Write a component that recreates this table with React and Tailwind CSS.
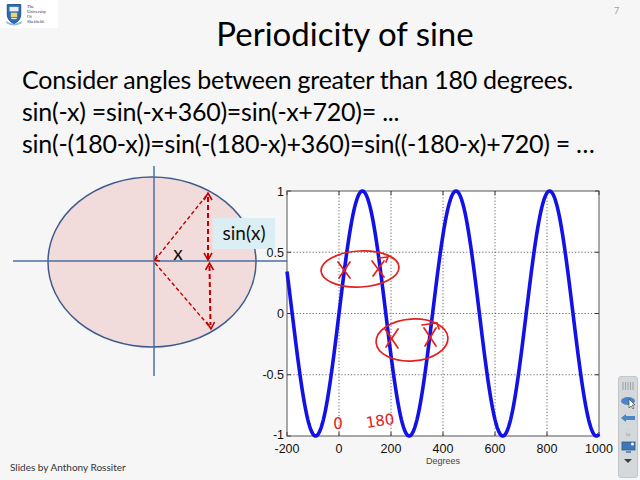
import React from 'react';

// sine curve in page coordinates of the chart svg
const X = (d) => 339 + d * 0.26;
const Y = (v) => 313.5 - v * 122.5;

const sinePath = () => {
  const pts = [];
  for (let d = -200; d <= 1000; d += 4) {
    pts.push(`${X(d).toFixed(2)},${Y(Math.sin((d * Math.PI) / 180)).toFixed(2)}`);
  }
  return 'M' + pts.join(' L');
};

function Logo() {
  return (
    <div className="w-[58px] h-[28px] shrink-0 bg-white flex items-center gap-[4px] pl-[5px]">
      <svg width="18" height="23" viewBox="0 0 20 25">
        <path d="M0.5 19.5 Q10 26 19.5 19.5 L18 22.5 Q10 27 2 22.5 Z" fill="#8fb7dc" />
        <path d="M2.5 1.5 H17.5 V12 Q17.5 19.5 10 22.5 Q2.5 19.5 2.5 12 Z" fill="#2d6db5" stroke="#1b4683" strokeWidth="1" />
        <rect x="5" y="4" width="10" height="5" fill="#e9eef6" />
        <rect x="6.5" y="10.5" width="7" height="5" fill="#f4d36a" />
        <path d="M7 17 H13" stroke="#e9eef6" strokeWidth="1.2" />
      </svg>
      <div className="flex flex-col font-['Liberation_Serif',serif] text-[4.5px] leading-[5px] text-[#1d2a5a]">
        <span>The</span>
        <span>University</span>
        <span>Of</span>
        <span>Sheffield.</span>
      </div>
    </div>
  );
}

function UnitCircle() {
  const red = '#c00000';
  return (
    <svg width="290" height="220" viewBox="0 162 290 220">
      <ellipse cx="152" cy="262" rx="104" ry="85" fill="#f2dcdb" stroke="#3d5b8c" strokeWidth="1.5" />
      <line x1="13" y1="261" x2="288" y2="261" stroke="#4a6fa5" strokeWidth="1.5" />
      <line x1="154" y1="166" x2="154" y2="376" stroke="#4a6fa5" strokeWidth="1.5" />

      <g stroke={red} fill="none" strokeWidth="1.4" strokeDasharray="4 2.5">
        <line x1="155" y1="260" x2="206" y2="196" />
        <line x1="155" y1="263" x2="209" y2="326" />
      </g>
      <g stroke={red} fill="none" strokeWidth="2" strokeDasharray="5 3">
        <line x1="208" y1="197" x2="208" y2="258" />
        <line x1="209.5" y1="266" x2="210.5" y2="325" />
      </g>
      <g stroke={red} fill="none" strokeWidth="1.6">
        <polyline points="204,200 208,193 212,200" />
        <polyline points="204,253 208,260 212,253" />
        <polyline points="205.5,270 209.5,263 213.5,270" />
        <polyline points="206.5,322 211,329 214.5,322" />
        <polyline points="157,255 155,260 160,261" />
      </g>

      <text x="178" y="260" textAnchor="middle" fontSize="19" fontFamily="Lato, sans-serif" fill="#111">x</text>
      <rect x="213" y="218" width="62" height="31" fill="#dbeef4" />
      <text x="244" y="240" textAnchor="middle" fontSize="19" fontFamily="Lato, sans-serif" fill="#111">sin(x)</text>
    </svg>
  );
}

function SineChart() {
  const xTicks = [-200, 0, 200, 400, 600, 800, 1000];
  const yTicks = [1, 0.5, 0, -0.5, -1];
  const pen = '#e3201b';
  return (
    <svg width="375" height="290" viewBox="240 182 375 290">
      <rect x="287" y="191" width="312" height="245" fill="#ffffff" />
      <g stroke="#444" strokeWidth="0.8" strokeDasharray="1.2 2">
        {[0, 200, 400, 600, 800].map((d) => (
          <line key={d} x1={X(d)} y1="191" x2={X(d)} y2="436" />
        ))}
        {[0.5, 0, -0.5].map((v) => (
          <line key={v} x1="287" y1={Y(v)} x2="599" y2={Y(v)} />
        ))}
      </g>
      <g stroke="#333" strokeWidth="1">
        {xTicks.map((d) => (
          <g key={d}>
            <line x1={X(d)} y1="436" x2={X(d)} y2="432" />
            <line x1={X(d)} y1="191" x2={X(d)} y2="195" />
          </g>
        ))}
        {yTicks.map((v) => (
          <g key={v}>
            <line x1="287" y1={Y(v)} x2="291" y2={Y(v)} />
            <line x1="599" y1={Y(v)} x2="595" y2={Y(v)} />
          </g>
        ))}
      </g>
      <rect x="287" y="191" width="312" height="245" fill="none" stroke="#555" strokeWidth="1" />

      <path d={sinePath()} fill="none" stroke="#1212e6" strokeWidth="3.6" strokeLinejoin="round" />

      <g fontFamily="'Liberation Sans', Arial, sans-serif" fontSize="12.5" fill="#111">
        {yTicks.map((v) => (
          <text key={v} x="284" y={Y(v) + (v === -1 ? 3 : 4.5)} textAnchor="end">{v}</text>
        ))}
        {xTicks.map((d) => (
          <text key={d} x={X(d)} y="453" textAnchor="middle">{d}</text>
        ))}
        <text x="443" y="464" textAnchor="middle" fontSize="9" fill="#444">Degrees</text>
      </g>

      {/* pen annotations */}
      <g stroke={pen} strokeWidth="1.7" fill="none" strokeLinecap="round">
        <ellipse cx="360" cy="269" rx="39" ry="18" transform="rotate(-3 360 269)" />
        <line x1="338" y1="262" x2="350" y2="278" />
        <line x1="350" y1="262" x2="339" y2="278" />
        <line x1="372" y1="261" x2="384" y2="277" />
        <line x1="384" y1="261" x2="373" y2="276" />
        <path d="M379 258 L388 257 L386 262" />

        <ellipse cx="412" cy="340" rx="36" ry="21" transform="rotate(-4 412 340)" />
        <line x1="385" y1="329" x2="398" y2="348" />
        <line x1="398" y1="329" x2="386" y2="347" />
        <line x1="424" y1="328" x2="436" y2="346" />
        <line x1="436" y1="328" x2="425" y2="346" />
        <path d="M422 325 L437 323 L439 329" />
      </g>
      <g fill={pen} fontFamily="'DejaVu Sans', sans-serif" fontSize="15">
        <text x="338" y="429" textAnchor="middle">0</text>
        <text x="380" y="426" textAnchor="middle" transform="rotate(-8 380 420)">180</text>
      </g>
    </svg>
  );
}

function PlayerBar() {
  return (
    <div className="absolute left-[618px] top-[376px] w-[20px] h-[102px] rounded-[3px] bg-[#d5d8db] border border-[#c2c6ca] flex flex-col items-center pt-[4px] gap-[4px]">
      <svg width="12" height="10" viewBox="0 0 12 10">
        {[1, 3.5, 6, 8.5, 11].map((x) => (
          <line key={x} x1={x} y1="1" x2={x} y2="9" stroke="#9ba1a7" strokeWidth="1" />
        ))}
      </svg>
      <svg width="16" height="14" viewBox="0 0 16 14">
        <ellipse cx="8" cy="6" rx="7" ry="4" fill="#4a86c5" />
        <path d="M9 4 L9 13 L11 11 L13 14 L14 13 L12 10 L15 10 Z" fill="#fff" stroke="#333" strokeWidth="0.6" />
      </svg>
      <svg width="16" height="10" viewBox="0 0 16 10">
        <path d="M1 5 L6 1 L6 3 L15 3 L15 7 L6 7 L6 9 Z" fill="#4a86c5" />
      </svg>
      <div className="flex flex-col items-center text-[4px] leading-[5px] text-[#8a9096] font-['DejaVu_Sans',sans-serif]">
        <span>· ·</span>
        <span>1x</span>
      </div>
      <svg width="15" height="13" viewBox="0 0 15 13">
        <rect x="1" y="1" width="13" height="8" fill="#3f78b8" stroke="#2a578c" strokeWidth="0.8" />
        <rect x="5" y="10" width="5" height="2" fill="#6b8fb5" />
        <circle cx="11.5" cy="3" r="1.5" fill="#fff" />
      </svg>
      <svg width="10" height="6" viewBox="0 0 10 6">
        <path d="M1 1 L9 1 L5 5 Z" fill="#3a3f45" />
      </svg>
    </div>
  );
}

export default function App() {
  return (
    <div className="relative w-[640px] h-[480px] overflow-hidden bg-[#f6f6f6] text-black font-['Lato',sans-serif]">
      <div className="flex items-start h-[53px]">
        <Logo />
        <h1 className="flex-1 text-center pl-[22px] pt-[13px] text-[33px] leading-[40px] font-normal">
          Periodicity of sine
        </h1>
        <div className="w-[30px] shrink-0 pl-[4px] pt-[4px] text-[9px] text-[#a0a0a0]">7</div>
      </div>

      <div className="mt-[10px] pl-[22px] text-[25px] leading-[32px] tracking-[-0.25px]">
        <p>Consider angles between greater than 180 degrees.</p>
        <p>sin(-x) =sin(-x+360)=sin(-x+720)= ...</p>
        <p>sin(-(180-x))=sin(-(180-x)+360)=sin((-180-x)+720) = …</p>
      </div>

      <div className="flex items-start">
        <div className="w-[290px] shrink-0 flex flex-col">
          <div className="mt-[3px]">
            <UnitCircle />
          </div>
          <p className="mt-[79px] pl-[10px] text-[10px] leading-[12px] text-[#333]">Slides by Anthony Rossiter</p>
        </div>
        <div className="-ml-[50px] mt-[23px]">
          <SineChart />
        </div>
      </div>

      <PlayerBar />
    </div>
  );
}
